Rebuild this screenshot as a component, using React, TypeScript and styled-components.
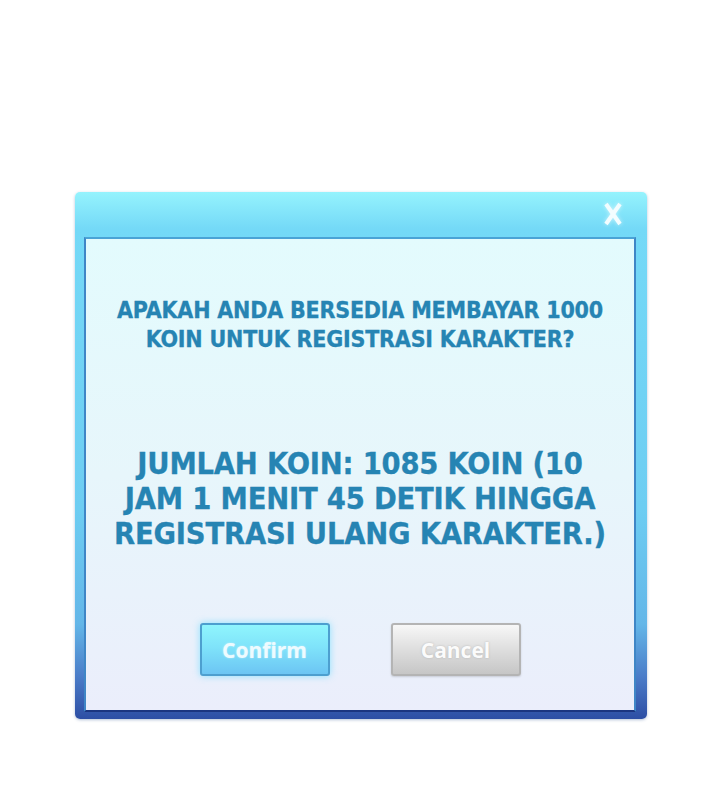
import { createGlobalStyle, styled } from "styled-components";

/**
 * PaymentDialog
 * Game-style confirm box asking whether to spend coins on a character registration.
 */

const GlobalStyle = createGlobalStyle`
  html, body {
    margin: 0;
    padding: 0;
    background: #ffffff;
  }
  body {
    width: 720px;
    height: 796px;
    overflow: hidden;
  }
`;

const Page = styled.div`
  width: 720px;
  height: 796px;
  padding: 192px 0 0 75px;
  box-sizing: border-box;
`;

const Frame = styled.div`
  width: 572px;
  height: 527px;
  box-sizing: border-box;
  display: flex;
  flex-direction: column;
  padding: 0 11px 7px 9px;
  border-radius: 5px;
  background: linear-gradient(
    to bottom,
    #95f3fd 0%,
    #74d9f7 7%,
    #6dcdf2 60%,
    #63b6e8 82%,
    #4a7cc8 92%,
    #2d4ea4 100%
  );
  box-shadow: 0 1px 3px rgba(40, 80, 140, 0.35);
`;

const TitleBar = styled.div`
  height: 45px;
  display: flex;
  align-items: center;
  justify-content: flex-end;
  padding-right: 12px;
  flex-shrink: 0;
`;

const CloseButton = styled.button`
  width: 22px;
  height: 26px;
  padding: 0;
  margin-top: -2px;
  border: none;
  background: transparent;
  cursor: pointer;
  display: flex;
  align-items: center;
  justify-content: center;
  svg {
    filter: drop-shadow(0 0 2px rgba(255, 255, 255, 0.6));
  }
`;

const Panel = styled.div`
  flex: 1;
  display: flex;
  flex-direction: column;
  align-items: center;
  border: 2px solid;
  border-color: #4aa3d6 #3f86c6 #1b3580 #3f86c6;
  background: linear-gradient(to bottom, #e3fbfd 0%, #e7f6fb 50%, #ebeefb 100%);
  padding-top: 57px;
`;

const Message = styled.p<{ $size: number; $lineHeight: number }>`
  margin: 0;
  text-align: center;
  color: #2684b3;
  font-family: "DejaVu Sans Condensed", "DejaVu Sans", sans-serif;
  font-weight: bold;
  font-size: ${(p) => p.$size}px;
  line-height: ${(p) => p.$lineHeight}px;
  letter-spacing: -0.2px;
  -webkit-text-stroke: 0.3px #2684b3;
`;

const Question = styled(Message)`
  margin-bottom: 92px;
`;

const ButtonRow = styled.div`
  display: flex;
  gap: 61px;
  margin-top: 72px;
`;

const DialogButton = styled.button<{ $variant: "confirm" | "cancel" }>`
  width: 130px;
  height: 53px;
  box-sizing: border-box;
  border-radius: 3px;
  font-family: "Open Sans", "DejaVu Sans", sans-serif;
  font-weight: bold;
  font-size: 21px;
  color: ${(p) => (p.$variant === "confirm" ? "#eefbff" : "#fbfbfb")};
  cursor: pointer;
  border: 2px solid
    ${(p) => (p.$variant === "confirm" ? "#4d9fcf" : "#b4b4b4")};
  background: ${(p) =>
    p.$variant === "confirm"
      ? "linear-gradient(to bottom, #8ff5fd 0%, #7fe3fa 45%, #6cc5f3 100%)"
      : "linear-gradient(to bottom, #f7f7f7 0%, #dedede 50%, #c6c6c6 100%)"};
  box-shadow: ${(p) =>
    p.$variant === "confirm"
      ? "0 0 7px rgba(110, 220, 255, 0.75)"
      : "0 1px 2px rgba(0, 0, 0, 0.15)"};
  text-shadow: ${(p) =>
    p.$variant === "confirm"
      ? "0 0 2px rgba(255, 255, 255, 0.5)"
      : "0 0 2px rgba(140, 140, 140, 0.5)"};
`;

const App = () => {
  return (
    <Page>
      <GlobalStyle />
      <Frame role="dialog" aria-label="Registrasi Karakter">
        <TitleBar>
          <CloseButton aria-label="Close">
            <svg width="20" height="24" viewBox="0 0 20 24">
              <path
                d="M3 2 L17 22 M17 2 L3 22"
                stroke="#f3fdff"
                strokeWidth="4"
                strokeLinecap="butt"
                fill="none"
              />
            </svg>
          </CloseButton>
        </TitleBar>
        <Panel>
          <Question $size={23} $lineHeight={29}>
            APAKAH ANDA BERSEDIA MEMBAYAR 1000
            <br />
            KOIN UNTUK REGISTRASI KARAKTER?
          </Question>
          <Message $size={30.5} $lineHeight={35}>
            JUMLAH KOIN: 1085 KOIN (10
            <br />
            JAM 1 MENIT 45 DETIK HINGGA
            <br />
            REGISTRASI ULANG KARAKTER.)
          </Message>
          <ButtonRow>
            <DialogButton $variant="confirm">Confirm</DialogButton>
            <DialogButton $variant="cancel">Cancel</DialogButton>
          </ButtonRow>
        </Panel>
      </Frame>
    </Page>
  );
};

export default App;
